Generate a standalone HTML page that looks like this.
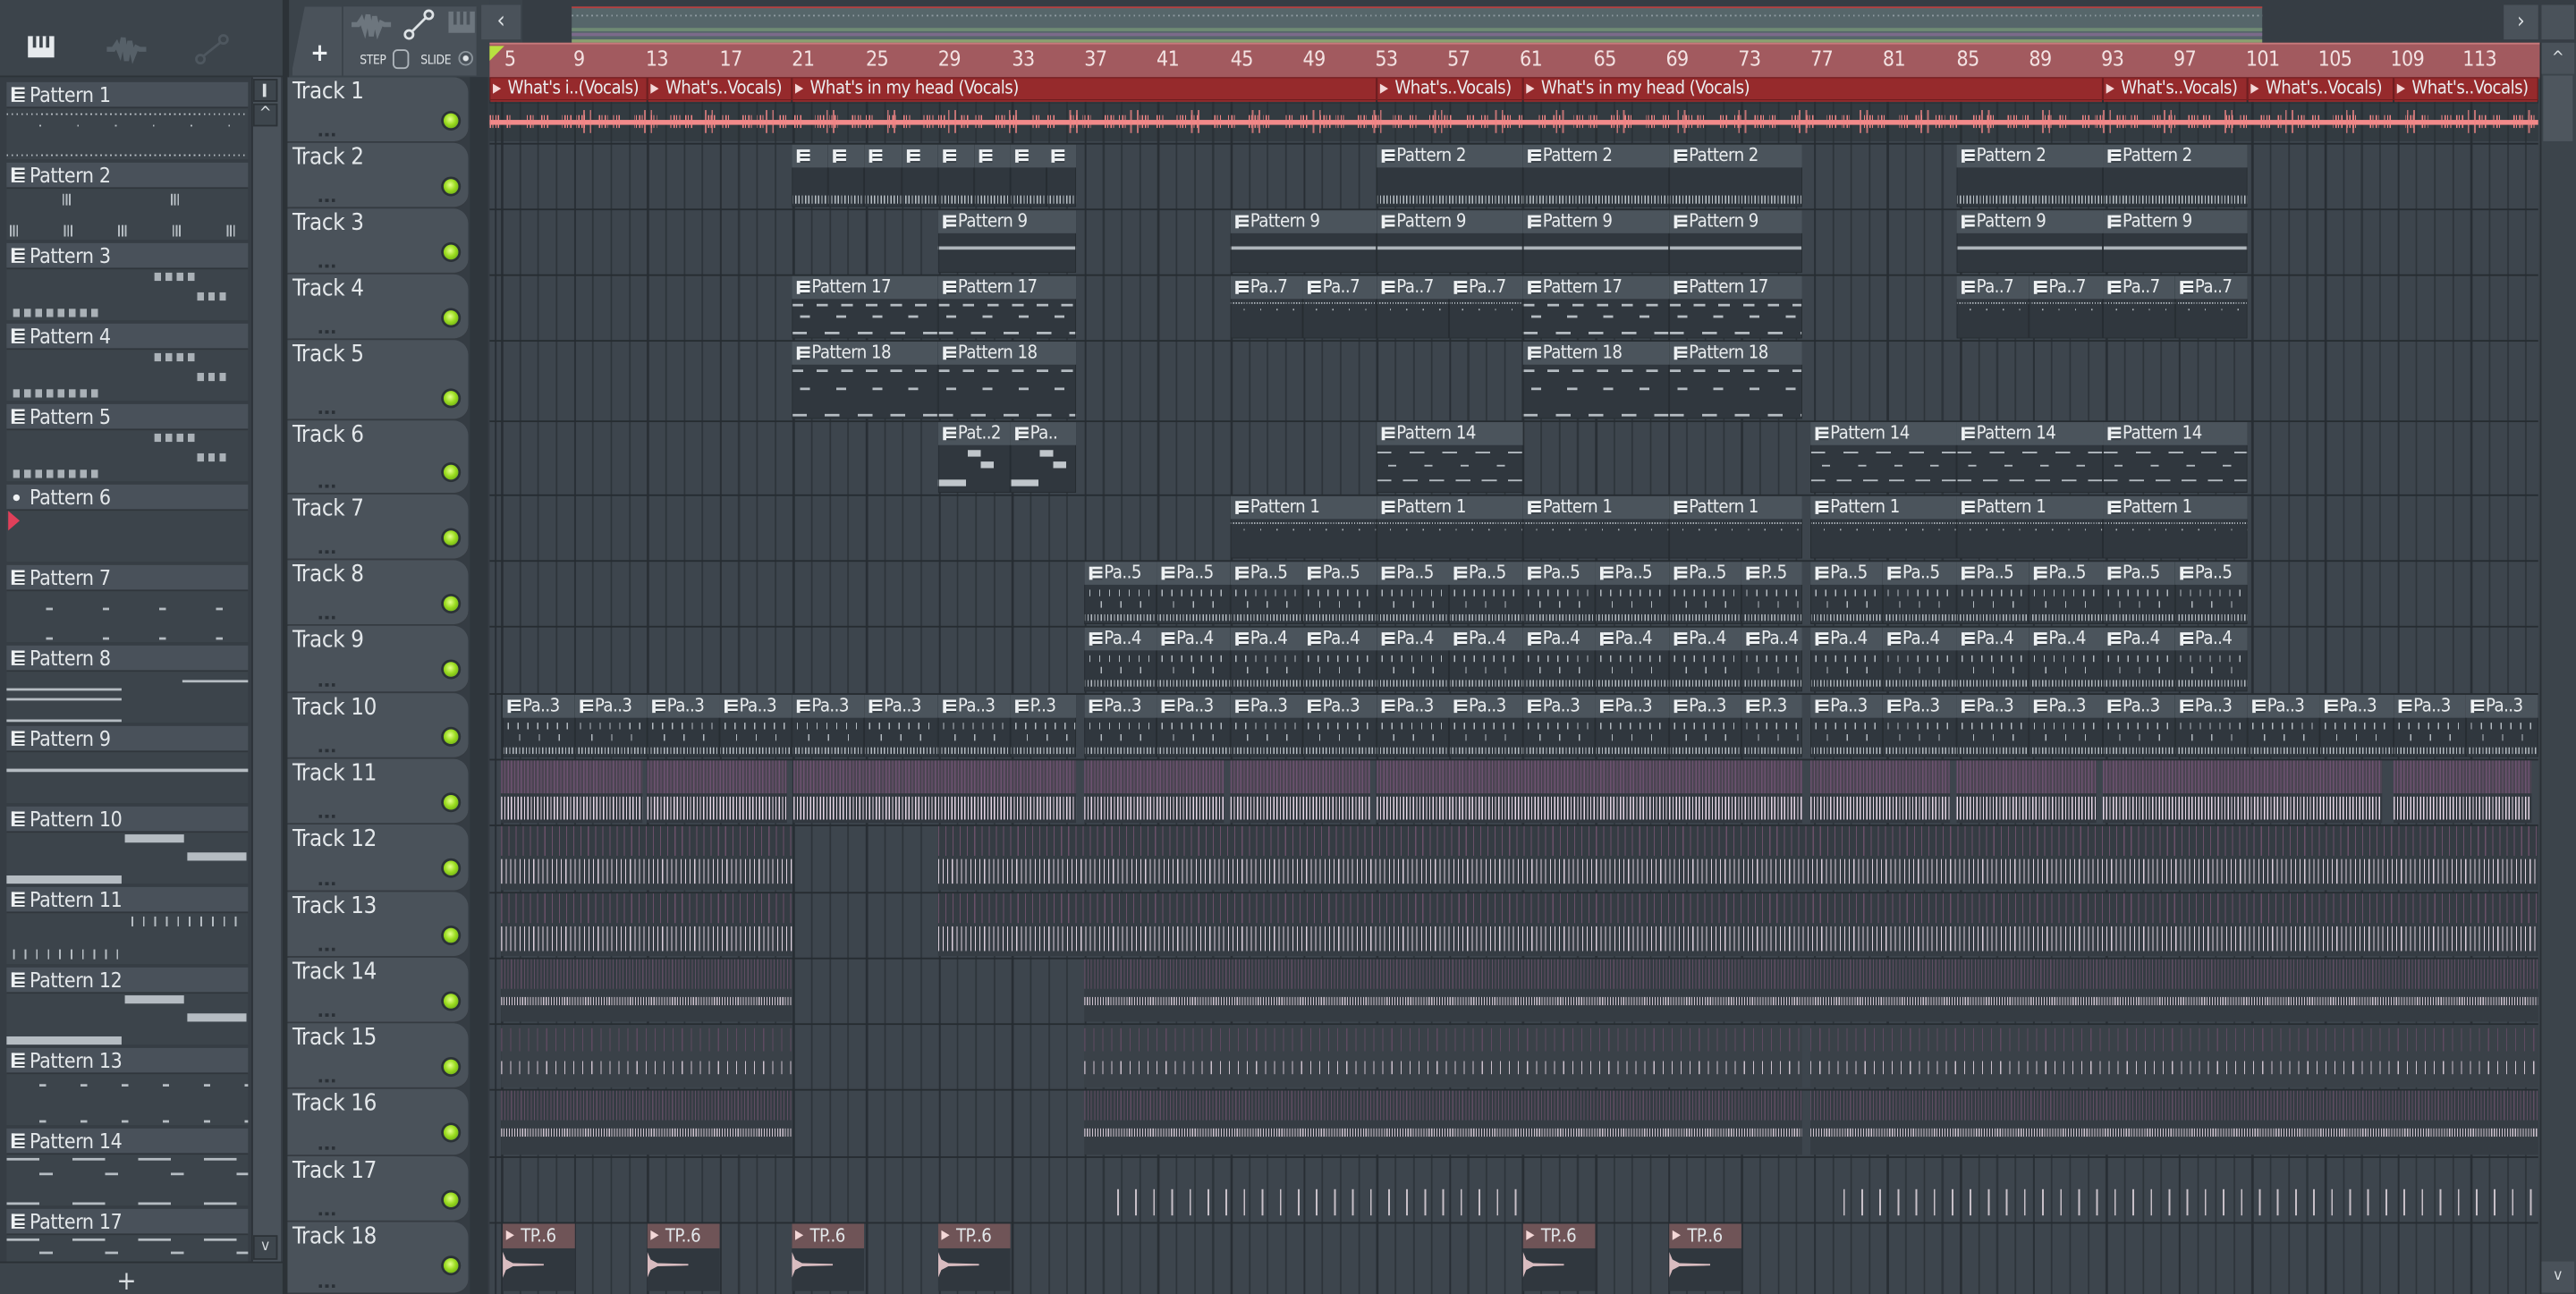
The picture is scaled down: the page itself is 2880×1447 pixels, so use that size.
<!DOCTYPE html>
<html><head><meta charset="utf-8"><style>
html,body{margin:0;padding:0;width:2880px;height:1446px;overflow:hidden;background:#3b434a}
#s{position:absolute;left:0;top:0;width:1568px;height:788px;transform:scale(1.836735);transform-origin:0 0;background:#3b434a;font-family:"Liberation Sans Narrow","DejaVu Sans Condensed","Liberation Sans",sans-serif;color:#e3e7ea;overflow:hidden}
.a{position:absolute}
#g{position:absolute;left:298px;top:47px;width:1247px;height:741px;background-color:#3d454d;
background-image:repeating-linear-gradient(90deg,#282e34 0 1.2px,transparent 1.2px 44.4px),repeating-linear-gradient(90deg,#2d343a 0 1px,transparent 1px 11.1px);background-position:7px 0,7px 0}
.hl{position:absolute;left:298px;width:1247px;height:1px;background:#262c31}
.th{position:absolute;left:175px;width:110px;background:#4a525a;border-radius:0 9px 9px 0;border-bottom:1px solid #353b41;box-sizing:border-box}
.th span{position:absolute;left:3px;top:1px;font-size:14px;letter-spacing:-.2px}
.th i{position:absolute;left:19px;bottom:3px;width:10px;height:2px;background:repeating-linear-gradient(90deg,#2a3036 0 2px,transparent 2px 4px)}
.th u{position:absolute;right:6px;top:22px;width:9px;height:9px;border-radius:50%;background:radial-gradient(circle at 45% 40%,#e2ff8a 0,#9bdc20 45%,#5a9a10 100%);box-shadow:0 0 0 1.5px #2b3237}
.c{position:absolute;background-color:#30373e;overflow:hidden;box-shadow:inset 0 0 0 .5px #262c31;background-repeat:no-repeat}
.c b{display:block;height:14px;background:#4b545c;font-weight:normal;font-size:11px;letter-spacing:-.3px;line-height:14px;padding-left:12px;white-space:nowrap;overflow:hidden;position:relative;color:#e9ecee}
.c b:before{content:"";position:absolute;left:3px;top:3px;width:6px;height:8px;background:repeating-linear-gradient(#eef1f3 0 1.5px,#3a4249 1.5px 2.7px);border-left:2px solid #eef1f3}
.c.au b{background:#962a2c;padding-left:11px;box-shadow:inset 0 0 0 .6px #6e1c1e}
.c.au b:before{width:0;height:0;border-left:5px solid #f3d7d7;border-top:3px solid transparent;border-bottom:3px solid transparent;background:none;top:4px;left:2px}
.t2{background-image:repeating-linear-gradient(90deg,#b9c0c6 0 .7px,transparent .7px 2px);background-size:100% 5px;background-position:0 31px}
.t9{background-image:linear-gradient(#aeb5bb,#aeb5bb);background-size:100% 2px;background-position:0 22px}
.t17{background-image:repeating-linear-gradient(90deg,#b5bcc2 0 7px,transparent 7px 15px),repeating-linear-gradient(90deg,transparent 0 5px,#b5bcc2 5px 11px,transparent 11px 22px),repeating-linear-gradient(90deg,#b5bcc2 0 9px,transparent 9px 20px);background-size:100% 1.5px,100% 1.5px,100% 1.5px;background-position:0 17px,0 24px,0 34px}
.t18{background-image:repeating-linear-gradient(90deg,#b5bcc2 0 7px,transparent 7px 15px),repeating-linear-gradient(90deg,transparent 0 5px,#b5bcc2 5px 11px,transparent 11px 22px),repeating-linear-gradient(90deg,#b5bcc2 0 9px,transparent 9px 20px);background-size:100% 1.5px,100% 1.5px,100% 1.5px;background-position:0 17px,0 28px,0 44px}
.t14{background-image:repeating-linear-gradient(90deg,#b5bcc2 0 9px,transparent 9px 20px),repeating-linear-gradient(90deg,transparent 0 7px,#b5bcc2 7px 12px,transparent 12px 22px),repeating-linear-gradient(90deg,#b5bcc2 0 9px,transparent 9px 16px);background-size:100% 1.2px,100% 1.2px,100% 1.2px;background-position:0 18px,0 26px,0 35px}
.t1{background-image:repeating-linear-gradient(90deg,#aeb5bb 0 .7px,transparent .7px 1.6px),repeating-linear-gradient(90deg,transparent 0 8px,#aeb5bb 8px 8.7px,transparent 8.7px 10px);background-size:100% 1px,100% 1px;background-position:0 16px,0 20px}
.tp{background-image:repeating-linear-gradient(90deg,transparent 0 3px,#b3bac0 3px 3.7px,transparent 3.7px 6px),repeating-linear-gradient(90deg,transparent 0 10px,#b3bac0 10px 10.7px,transparent 10.7px 12px),repeating-linear-gradient(90deg,#b3bac0 0 .7px,transparent .7px 2px);background-size:100% 4px,100% 4px,100% 4px;background-position:0 17px,0 24px,0 32px}
.t6{background-image:linear-gradient(90deg,transparent 0 18px,#c0c6cb 18px 26px,transparent 26px),linear-gradient(90deg,transparent 0 26px,#c0c6cb 26px 34px,transparent 34px),linear-gradient(90deg,#c0c6cb 0 17px,transparent 17px);background-size:100% 4px,100% 4px,100% 4px;background-position:0 17px,0 24px,0 35px}
.w{position:absolute;background-color:#32383f;background-image:repeating-linear-gradient(90deg,#6d5270 0 .7px,#4b4452 .7px 2px),repeating-linear-gradient(90deg,#e6d6e6 0 .7px,transparent .7px 2px);background-size:100% 20px,100% 14px;background-position:0 0,0 22px;background-repeat:no-repeat}
.w2{position:absolute;background-color:#353c43;background-image:repeating-linear-gradient(90deg,#6a5068 0 .6px,transparent .6px 4.4px),repeating-linear-gradient(90deg,#ddd0dd 0 .6px,transparent .6px 2.8px);background-size:100% 18px,100% 15px;background-position:0 0,0 20px;background-repeat:no-repeat}
.w3{position:absolute;background-color:#353c43;background-image:repeating-linear-gradient(90deg,#5f4d62 0 .6px,transparent .6px 2px),repeating-linear-gradient(90deg,#cfc3cf 0 .6px,transparent .6px 1.6px);background-size:100% 18px,100% 5px;background-position:0 0,0 23px;background-repeat:no-repeat}
.w4{position:absolute;background-color:#3a4148;background-image:repeating-linear-gradient(90deg,#5e4a60 0 .6px,transparent .6px 5.5px),repeating-linear-gradient(90deg,#ccc0cc 0 .6px,transparent .6px 5.5px);background-size:100% 14px,100% 8px;background-position:0 2px,0 22px;background-repeat:no-repeat}
.rn{position:absolute;top:28px;font-size:12.5px;color:#f3e2e2;letter-spacing:-.3px}
.pl{position:absolute;left:4px;width:147px}
.pl b{display:block;height:15px;background:#49515a;font-weight:normal;font-size:12.5px;letter-spacing:-.2px;line-height:15px;padding-left:14px;position:relative;border-bottom:1px solid #30363c}
.pl b:before{content:"";position:absolute;left:3px;top:3px;width:6px;height:9px;background:repeating-linear-gradient(#eef1f3 0 1.5px,#3a4249 1.5px 2.7px);border-left:2px solid #eef1f3}
.pl.n b:before{width:4px;height:4px;border:none;border-radius:50%;background:#eef1f3;top:6px;left:4px}
.pl div{height:31px;background-color:#3c444b;background-repeat:no-repeat}
.tpc{position:absolute;height:41px;background:#30373e;overflow:hidden}
.tpc b{display:block;height:15px;background:#6f5457;font-weight:normal;font-size:11px;letter-spacing:-.3px;line-height:15px;padding-left:11px;position:relative}
.tpc b:before{content:"";position:absolute;left:2px;top:4px;border-left:5px solid #f3d7d7;border-top:3px solid transparent;border-bottom:3px solid transparent}
.tpc i{position:absolute;left:0;top:17px;width:25px;height:16px;background:#d9bcc0;clip-path:polygon(0 0,8% 30%,25% 44%,100% 47%,100% 53%,25% 56%,8% 70%,0 100%)}
</style></head><body><div id="s">

<!-- top left toolbar -->
<div class="a" style="left:0;top:0;width:172px;height:46px;background:#3c444b;border-bottom:2px solid #2d3338"></div>
<div class="a" style="left:17px;top:22px;width:16px;height:13px;background:#e6eaed"></div>
<div class="a" style="left:20px;top:22px;width:2px;height:7px;background:#3c444b"></div>
<div class="a" style="left:24px;top:22px;width:2px;height:7px;background:#3c444b"></div>
<div class="a" style="left:28px;top:22px;width:2px;height:7px;background:#3c444b"></div>
<svg class="a" style="left:64px;top:20px" width="26" height="20"><path d="M1 10 L5 10 L7 7 L9 12 L11 3 L13 17 L15 5 L17 14 L19 9 L21 10 L25 10" stroke="#566068" stroke-width="3" fill="none"/></svg>
<svg class="a" style="left:118px;top:20px" width="22" height="20"><circle cx="4" cy="16" r="2.5" stroke="#4e575f" stroke-width="1.5" fill="none"/><circle cx="18" cy="4" r="2.5" stroke="#4e575f" stroke-width="1.5" fill="none"/><path d="M6 14 L16 6" stroke="#4e575f" stroke-width="1.5"/></svg>

<!-- patterns list -->
<div class="a" style="left:0;top:47px;width:172px;height:741px;background:#363d44"></div>
<div class="pl" style="top:50px"><b>Pattern 1</b><div style="background-image:repeating-linear-gradient(90deg,#b5bcc2 0 1px,transparent 1px 3px),repeating-linear-gradient(90deg,transparent 0 20px,#b5bcc2 20px 21px,transparent 21px 23px),repeating-linear-gradient(90deg,#b5bcc2 0 1px,transparent 1px 3px);background-size:100% 1.2px,100% 1.2px,100% 1.2px;background-position:0 3px,0 10px,0 28px"></div></div>
<div class="pl" style="top:99px"><b>Pattern 2</b><div style="background-image:repeating-linear-gradient(90deg,transparent 0 34px,#b5bcc2 34px 35px,transparent 35px 36px,#b5bcc2 36px 37px,transparent 37px 38px,#b5bcc2 38px 39px,transparent 39px 66px),repeating-linear-gradient(90deg,transparent 0 2px,#b5bcc2 2px 3px,transparent 3px 4px,#b5bcc2 4px 5px,transparent 5px 6px,#b5bcc2 6px 7px,transparent 7px 33px);background-size:100% 7px,100% 7px;background-position:0 3px,0 22px"></div></div>
<div class="pl" style="top:148px"><b>Pattern 3</b><div style="background-image:repeating-linear-gradient(90deg,#aab1b7 0 4px,transparent 4px 6.8px),repeating-linear-gradient(90deg,#aab1b7 0 4px,transparent 4px 6.8px),repeating-linear-gradient(90deg,#aab1b7 0 4px,transparent 4px 6.8px);background-size:54px 5px,27px 5px,20px 5px;background-position:4px 24px,90px 2px,116px 14px"></div></div>
<div class="pl" style="top:197px"><b>Pattern 4</b><div style="background-image:repeating-linear-gradient(90deg,#aab1b7 0 4px,transparent 4px 6.8px),repeating-linear-gradient(90deg,#aab1b7 0 4px,transparent 4px 6.8px),repeating-linear-gradient(90deg,#aab1b7 0 4px,transparent 4px 6.8px);background-size:54px 5px,27px 5px,20px 5px;background-position:4px 24px,90px 2px,116px 14px"></div></div>
<div class="pl" style="top:246px"><b>Pattern 5</b><div style="background-image:repeating-linear-gradient(90deg,#aab1b7 0 4px,transparent 4px 6.8px),repeating-linear-gradient(90deg,#aab1b7 0 4px,transparent 4px 6.8px),repeating-linear-gradient(90deg,#aab1b7 0 4px,transparent 4px 6.8px);background-size:54px 5px,27px 5px,20px 5px;background-position:4px 24px,90px 2px,116px 14px"></div></div>
<div class="pl n" style="top:295px"><b>Pattern 6</b><div></div></div>
<div class="a" style="left:5px;top:311px;width:0;height:0;border-left:7px solid #e0405a;border-top:6px solid transparent;border-bottom:6px solid transparent"></div>
<div class="pl" style="top:344px"><b>Pattern 7</b><div style="background-image:repeating-linear-gradient(90deg,transparent 0 24px,#b5bcc2 24px 28px,transparent 28px 34.5px),repeating-linear-gradient(90deg,transparent 0 24px,#b5bcc2 24px 28px,transparent 28px 34.5px);background-size:100% 1.5px,100% 1.5px;background-position:0 10px,0 28px"></div></div>
<div class="pl" style="top:393px"><b>Pattern 8</b><div style="background-image:linear-gradient(#b5bcc2,#b5bcc2),linear-gradient(#b5bcc2,#b5bcc2),linear-gradient(#b5bcc2,#b5bcc2),linear-gradient(#b5bcc2,#b5bcc2);background-size:70px 1.5px,70px 1.5px,40px 1.5px,70px 1.5px;background-position:0 10px,0 16px,107px 5px,0 29px"></div></div>
<div class="pl" style="top:442px"><b>Pattern 9</b><div style="background-image:linear-gradient(#b5bcc2,#b5bcc2);background-size:100% 2px;background-position:0 10px"></div></div>
<div class="pl" style="top:491px"><b>Pattern 10</b><div style="background-image:linear-gradient(#b5bcc2,#b5bcc2),linear-gradient(#b5bcc2,#b5bcc2),linear-gradient(#b5bcc2,#b5bcc2);background-size:70px 5px,36px 5px,36px 5px;background-position:0 26px,72px 1px,110px 12px"></div></div>
<div class="pl" style="top:540px"><b>Pattern 11</b><div style="background-image:repeating-linear-gradient(90deg,#b5bcc2 0 1px,transparent 1px 7px),repeating-linear-gradient(90deg,#b5bcc2 0 1px,transparent 1px 7px);background-size:70px 6px,70px 6px;background-position:4px 22px,76px 2px"></div></div>
<div class="pl" style="top:589px"><b>Pattern 12</b><div style="background-image:linear-gradient(#b5bcc2,#b5bcc2),linear-gradient(#b5bcc2,#b5bcc2),linear-gradient(#b5bcc2,#b5bcc2);background-size:70px 5px,36px 5px,36px 5px;background-position:0 26px,72px 1px,110px 12px"></div></div>
<div class="pl" style="top:638px"><b>Pattern 13</b><div style="background-image:repeating-linear-gradient(90deg,transparent 0 20px,#b5bcc2 20px 24px,transparent 24px 25px),repeating-linear-gradient(90deg,transparent 0 20px,#b5bcc2 20px 24px,transparent 24px 25px);background-size:100% 1.5px,100% 1.5px;background-position:0 6px,0 28px"></div></div>
<div class="pl" style="top:687px"><b>Pattern 14</b><div style="background-image:repeating-linear-gradient(90deg,#b5bcc2 0 20px,transparent 20px 40px),repeating-linear-gradient(90deg,transparent 0 20px,#b5bcc2 20px 28px,transparent 28px 40px),repeating-linear-gradient(90deg,#b5bcc2 0 20px,transparent 20px 40px);background-size:100% 1.5px,100% 1.5px,100% 1.5px;background-position:0 2px,0 11px,0 29px"></div></div>
<div class="pl" style="top:736px"><b>Pattern 17</b><div style="height:17px;background-image:repeating-linear-gradient(90deg,#b5bcc2 0 20px,transparent 20px 40px),repeating-linear-gradient(90deg,transparent 0 20px,#b5bcc2 20px 28px,transparent 28px 40px);background-size:100% 1.5px,100% 1.5px;background-position:0 2px,0 10px"></div></div>
<div class="a" style="left:0;top:768px;width:172px;height:20px;background:#3c444b;border-top:1px solid #2a3035"></div>
<div class="a" style="left:71px;top:770px;font-size:16px;color:#d8dde0">+</div>
<!-- pattern scrollbar -->
<div class="a" style="left:153px;top:47px;width:17px;height:721px;background:#4a525a;border-left:1px solid #2c3237"></div>
<div class="a" style="left:154px;top:48px;width:15px;height:14px;background:#3e464d;box-shadow:inset 0 0 0 1px #2c3237"></div>
<div class="a" style="left:160px;top:51px;width:2px;height:8px;background:#d8dde0"></div>
<div class="a" style="left:154px;top:63px;width:15px;height:14px;background:#3e464d;box-shadow:inset 0 0 0 1px #2c3237;font-size:10px;text-align:center;color:#d8dde0;line-height:14px">^</div>
<div class="a" style="left:154px;top:752px;width:15px;height:15px;background:#3e464d;box-shadow:inset 0 0 0 1px #2c3237;font-size:9px;text-align:center;color:#d8dde0;line-height:15px">v</div>
<div class="a" style="left:172px;top:0;width:4px;height:788px;background:#2c3237"></div>

<!-- middle toolbar -->
<div class="a" style="left:176px;top:0;width:122px;height:47px;background:#3b434a"></div>
<div class="a" style="left:178px;top:4px;width:30px;height:42px;background:#4a525a;clip-path:polygon(25% 0,100% 0,100% 100%,0 100%,0 90%)"></div>
<div class="a" style="left:189px;top:23px;font-size:15px;font-weight:bold;color:#eef1f3">+</div>
<div class="a" style="left:209px;top:4px;width:81px;height:42px;background:#4a525a"></div>
<svg class="a" style="left:213px;top:6px" width="26" height="18"><path d="M1 9 L5 9 L7 6 L9 12 L11 3 L13 16 L15 4 L17 13 L19 8 L21 9 L25 9" stroke="#6d767e" stroke-width="3" fill="none"/></svg>
<svg class="a" style="left:245px;top:5px" width="20" height="20"><circle cx="4" cy="16" r="2.5" stroke="#dde2e5" stroke-width="1.5" fill="none"/><circle cx="16" cy="4" r="2.5" stroke="#dde2e5" stroke-width="1.5" fill="none"/><path d="M6 14 L14 6" stroke="#dde2e5" stroke-width="1.5"/></svg>
<div class="a" style="left:273px;top:7px;width:16px;height:13px;background:#6d767e"></div>
<div class="a" style="left:276px;top:7px;width:2px;height:8px;background:#4a525a"></div>
<div class="a" style="left:280px;top:7px;width:2px;height:8px;background:#4a525a"></div>
<div class="a" style="left:284px;top:7px;width:2px;height:8px;background:#4a525a"></div>
<div class="a" style="left:219px;top:32px;font-size:7.5px;color:#e0e4e7;letter-spacing:-.2px">STEP</div>
<div class="a" style="left:239px;top:30px;width:8px;height:10px;border:1.3px solid #aeb5bb;border-radius:3px"></div>
<div class="a" style="left:256px;top:32px;font-size:7.5px;color:#e0e4e7;letter-spacing:-.2px">SLIDE</div>
<div class="a" style="left:279px;top:31px;width:7px;height:7px;border:1.2px solid #8b949b;border-radius:50%;background:radial-gradient(circle,#e0e4e7 0 30%,transparent 40%)"></div>
<!-- overview -->
<div class="a" style="left:318px;top:0;width:1250px;height:27px;background:#363d44"></div>
<div class="a" style="left:293px;top:3px;width:24px;height:21px;background:#4a525a;color:#dde2e5;font-size:14px;text-align:center;line-height:20px">&lsaquo;</div>
<div class="a" style="left:348px;top:4px;width:1029px;height:19px;background:#56666a;border-top:1px solid #b84040;border-bottom:2px solid #8aa070;background-image:repeating-linear-gradient(90deg,#8e9aa0 0 1px,transparent 1px 3px),linear-gradient(#6f8a74,#6f8a74),linear-gradient(#7b6a8a,#7b6a8a);background-size:100% 1px,100% 2px,100% 2px;background-position:0 4px,0 12px,0 15px;background-repeat:no-repeat"></div>
<div class="a" style="left:1524px;top:3px;width:21px;height:21px;background:#4a525a;color:#dde2e5;font-size:13px;text-align:center;line-height:21px">&rsaquo;</div>
<div class="a" style="left:1547px;top:3px;width:20px;height:21px;background:#4a525a"></div>

<!-- grid -->
<div id="g"></div>
<!-- ruler -->
<div class="a" style="left:298px;top:26px;width:1248px;height:20px;background:#a25a5f;border-top:1px solid #c87a7c;border-bottom:1px solid #7b3a3e"></div>
<div class="a" style="left:298px;top:28px;width:0;height:0;border-left:9px solid #b8e040;border-bottom:9px solid transparent"></div>
<div class="rn" style="left:307px">5</div><div class="rn" style="left:349px">9</div><div class="rn" style="left:393px">13</div><div class="rn" style="left:438px">17</div><div class="rn" style="left:482px">21</div><div class="rn" style="left:527px">25</div><div class="rn" style="left:571px">29</div><div class="rn" style="left:616px">33</div><div class="rn" style="left:660px">37</div><div class="rn" style="left:704px">41</div><div class="rn" style="left:749px">45</div><div class="rn" style="left:793px">49</div><div class="rn" style="left:837px">53</div><div class="rn" style="left:881px">57</div><div class="rn" style="left:925px">61</div><div class="rn" style="left:970px">65</div><div class="rn" style="left:1014px">69</div><div class="rn" style="left:1058px">73</div><div class="rn" style="left:1102px">77</div><div class="rn" style="left:1146px">81</div><div class="rn" style="left:1191px">85</div><div class="rn" style="left:1235px">89</div><div class="rn" style="left:1279px">93</div><div class="rn" style="left:1323px">97</div><div class="rn" style="left:1367px">101</div><div class="rn" style="left:1411px">105</div><div class="rn" style="left:1455px">109</div><div class="rn" style="left:1499px">113</div>
<!-- right scroll -->
<div class="a" style="left:1546px;top:26px;width:22px;height:762px;background:#3c444b;border-left:1px solid #2a3035"></div>
<div class="a" style="left:1547px;top:26px;width:20px;height:19px;background:#4a525a;color:#dde2e5;font-size:10px;text-align:center;line-height:19px">^</div>
<div class="a" style="left:1548px;top:46px;width:18px;height:40px;background:#4e565e"></div>
<div class="a" style="left:1547px;top:768px;width:20px;height:19px;background:#4a525a;color:#dde2e5;font-size:9px;text-align:center;line-height:19px">v</div>

<!-- track column bg -->
<div class="a" style="left:176px;top:47px;width:122px;height:741px;background:#353c43"></div>
<div class="a" style="left:286px;top:47px;width:11px;height:741px;background:#2f363c"></div>

<!-- track headers -->
<div class="th" style="top:47px;height:40px"><span>Track 1</span><i></i><u></u></div>
<div class="th" style="top:87px;height:40px"><span>Track 2</span><i></i><u></u></div>
<div class="th" style="top:127px;height:40px"><span>Track 3</span><i></i><u></u></div>
<div class="th" style="top:167px;height:40px"><span>Track 4</span><i></i><u></u></div>
<div class="th" style="top:207px;height:49px"><span>Track 5</span><i></i><u style="top:31px"></u></div>
<div class="th" style="top:256px;height:45px"><span>Track 6</span><i></i><u style="top:27px"></u></div>
<div class="th" style="top:301px;height:40px"><span>Track 7</span><i></i><u></u></div>
<div class="th" style="top:341px;height:40px"><span>Track 8</span><i></i><u></u></div>
<div class="th" style="top:381px;height:41px"><span>Track 9</span><i></i><u></u></div>
<div class="th" style="top:422px;height:40px"><span>Track 10</span><i></i><u></u></div>
<div class="th" style="top:462px;height:40px"><span>Track 11</span><i></i><u></u></div>
<div class="th" style="top:502px;height:41px"><span>Track 12</span><i></i><u></u></div>
<div class="th" style="top:543px;height:40px"><span>Track 13</span><i></i><u></u></div>
<div class="th" style="top:583px;height:40px"><span>Track 14</span><i></i><u></u></div>
<div class="th" style="top:623px;height:40px"><span>Track 15</span><i></i><u></u></div>
<div class="th" style="top:663px;height:41px"><span>Track 16</span><i></i><u></u></div>
<div class="th" style="top:704px;height:40px"><span>Track 17</span><i></i><u></u></div>
<div class="th" style="top:744px;height:44px"><span>Track 18</span><i></i><u></u></div>

<!-- row separators -->
<div class="hl" style="top:87px"></div><div class="hl" style="top:127px"></div><div class="hl" style="top:167px"></div><div class="hl" style="top:207px"></div><div class="hl" style="top:256px"></div><div class="hl" style="top:301px"></div><div class="hl" style="top:341px"></div><div class="hl" style="top:381px"></div><div class="hl" style="top:422px"></div><div class="hl" style="top:462px"></div><div class="hl" style="top:502px"></div><div class="hl" style="top:543px"></div><div class="hl" style="top:583px"></div><div class="hl" style="top:623px"></div><div class="hl" style="top:663px"></div><div class="hl" style="top:704px"></div><div class="hl" style="top:744px"></div>

<!-- Track 1 audio -->
<div class="a" style="left:298px;top:47px;width:1247px;height:39px;background:rgba(40,46,52,.45)"></div>
<div class="a" style="left:298px;top:47px;width:1247px;height:15px;background:#932a2c"></div>
<div class="a" style="left:298px;top:72.5px;width:1247px;height:3px;background:#f28a8a"></div>
<div class="a" style="left:298px;top:70px;width:1247px;height:8px;background:repeating-linear-gradient(90deg,#f08585 0 .8px,transparent .8px 1.6px,#f08585 1.6px 2.2px,transparent 2.2px 3.5px);-webkit-mask:repeating-linear-gradient(90deg,#000 0 6px,transparent 6px 9px,#000 9px 14px,transparent 14px 22px)"></div>
<div class="a" style="left:340px;top:67px;width:1200px;height:14px;background:repeating-linear-gradient(90deg,transparent 0 15px,#f08585 15px 16px,transparent 16px 19px,#f08585 19px 20px,transparent 20px 37px);opacity:.75"></div>
<div class="c au" style="left:298px;top:47px;width:96px;height:16px;background:none"><b>What's i..(Vocals)</b></div>
<div class="c au" style="left:394px;top:47px;width:88px;height:16px;background:none"><b>What's..Vocals)</b></div>
<div class="c au" style="left:482px;top:47px;width:356px;height:16px;background:none"><b>What's in my head (Vocals)</b></div>
<div class="c au" style="left:838px;top:47px;width:89px;height:16px;background:none"><b>What's..Vocals)</b></div>
<div class="c au" style="left:927px;top:47px;width:353px;height:16px;background:none"><b>What's in my head (Vocals)</b></div>
<div class="c au" style="left:1280px;top:47px;width:88px;height:16px;background:none"><b>What's..Vocals)</b></div>
<div class="c au" style="left:1368px;top:47px;width:89px;height:16px;background:none"><b>What's..Vocals)</b></div>
<div class="c au" style="left:1457px;top:47px;width:88px;height:16px;background:none"><b>What's..Vocals)</b></div>

<!-- Track 2 -->
<div class="c t2" style="left:482px;top:88px;width:22px;height:38px"><b></b></div>
<div class="c t2" style="left:504px;top:88px;width:22px;height:38px"><b></b></div>
<div class="c t2" style="left:526px;top:88px;width:23px;height:38px"><b></b></div>
<div class="c t2" style="left:549px;top:88px;width:22px;height:38px"><b></b></div>
<div class="c t2" style="left:571px;top:88px;width:22px;height:38px"><b></b></div>
<div class="c t2" style="left:593px;top:88px;width:22px;height:38px"><b></b></div>
<div class="c t2" style="left:615px;top:88px;width:22px;height:38px"><b></b></div>
<div class="c t2" style="left:637px;top:88px;width:18px;height:38px"><b></b></div>
<div class="c t2" style="left:838px;top:88px;width:89px;height:38px"><b>Pattern 2</b></div>
<div class="c t2" style="left:927px;top:88px;width:89px;height:38px"><b>Pattern 2</b></div>
<div class="c t2" style="left:1016px;top:88px;width:81px;height:38px"><b>Pattern 2</b></div>
<div class="c t2" style="left:1191px;top:88px;width:89px;height:38px"><b>Pattern 2</b></div>
<div class="c t2" style="left:1280px;top:88px;width:88px;height:38px"><b>Pattern 2</b></div>

<!-- Track 3 -->
<div class="c t9" style="left:571px;top:128px;width:84px;height:38px"><b>Pattern 9</b></div>
<div class="c t9" style="left:749px;top:128px;width:89px;height:38px"><b>Pattern 9</b></div>
<div class="c t9" style="left:838px;top:128px;width:89px;height:38px"><b>Pattern 9</b></div>
<div class="c t9" style="left:927px;top:128px;width:89px;height:38px"><b>Pattern 9</b></div>
<div class="c t9" style="left:1016px;top:128px;width:81px;height:38px"><b>Pattern 9</b></div>
<div class="c t9" style="left:1191px;top:128px;width:89px;height:38px"><b>Pattern 9</b></div>
<div class="c t9" style="left:1280px;top:128px;width:88px;height:38px"><b>Pattern 9</b></div>

<!-- Track 4 -->
<div class="c t17" style="left:482px;top:168px;width:89px;height:38px"><b>Pattern 17</b></div>
<div class="c t17" style="left:571px;top:168px;width:84px;height:38px"><b>Pattern 17</b></div>
<div class="c t1" style="left:749px;top:168px;width:44px;height:38px"><b>Pa..7</b></div>
<div class="c t1" style="left:793px;top:168px;width:45px;height:38px"><b>Pa..7</b></div>
<div class="c t1" style="left:838px;top:168px;width:44px;height:38px"><b>Pa..7</b></div>
<div class="c t1" style="left:882px;top:168px;width:45px;height:38px"><b>Pa..7</b></div>
<div class="c t17" style="left:927px;top:168px;width:89px;height:38px"><b>Pattern 17</b></div>
<div class="c t17" style="left:1016px;top:168px;width:81px;height:38px"><b>Pattern 17</b></div>
<div class="c t1" style="left:1191px;top:168px;width:44px;height:38px"><b>Pa..7</b></div>
<div class="c t1" style="left:1235px;top:168px;width:45px;height:38px"><b>Pa..7</b></div>
<div class="c t1" style="left:1280px;top:168px;width:44px;height:38px"><b>Pa..7</b></div>
<div class="c t1" style="left:1324px;top:168px;width:44px;height:38px"><b>Pa..7</b></div>

<!-- Track 5 -->
<div class="c t18" style="left:482px;top:208px;width:89px;height:47px"><b>Pattern 18</b></div>
<div class="c t18" style="left:571px;top:208px;width:84px;height:47px"><b>Pattern 18</b></div>
<div class="c t18" style="left:927px;top:208px;width:89px;height:47px"><b>Pattern 18</b></div>
<div class="c t18" style="left:1016px;top:208px;width:81px;height:47px"><b>Pattern 18</b></div>

<!-- Track 6 -->
<div class="c t6" style="left:571px;top:257px;width:44px;height:43px"><b>Pat..2</b></div>
<div class="c t6" style="left:615px;top:257px;width:40px;height:43px"><b>Pa..</b></div>
<div class="c t14" style="left:838px;top:257px;width:89px;height:43px"><b>Pattern 14</b></div>
<div class="c t14" style="left:1102px;top:257px;width:89px;height:43px"><b>Pattern 14</b></div>
<div class="c t14" style="left:1191px;top:257px;width:89px;height:43px"><b>Pattern 14</b></div>
<div class="c t14" style="left:1280px;top:257px;width:88px;height:43px"><b>Pattern 14</b></div>

<!-- Track 7 -->
<div class="c t1" style="left:749px;top:302px;width:89px;height:38px"><b>Pattern 1</b></div>
<div class="c t1" style="left:838px;top:302px;width:89px;height:38px"><b>Pattern 1</b></div>
<div class="c t1" style="left:927px;top:302px;width:89px;height:38px"><b>Pattern 1</b></div>
<div class="c t1" style="left:1016px;top:302px;width:81px;height:38px"><b>Pattern 1</b></div>
<div class="c t1" style="left:1102px;top:302px;width:89px;height:38px"><b>Pattern 1</b></div>
<div class="c t1" style="left:1191px;top:302px;width:89px;height:38px"><b>Pattern 1</b></div>
<div class="c t1" style="left:1280px;top:302px;width:88px;height:38px"><b>Pattern 1</b></div>

<!-- Track 8 -->
<div class="c tp" style="left:660px;top:342px;width:44px;height:38px"><b>Pa..5</b></div>
<div class="c tp" style="left:704px;top:342px;width:45px;height:38px"><b>Pa..5</b></div>
<div class="c tp" style="left:749px;top:342px;width:44px;height:38px"><b>Pa..5</b></div>
<div class="c tp" style="left:793px;top:342px;width:45px;height:38px"><b>Pa..5</b></div>
<div class="c tp" style="left:838px;top:342px;width:44px;height:38px"><b>Pa..5</b></div>
<div class="c tp" style="left:882px;top:342px;width:45px;height:38px"><b>Pa..5</b></div>
<div class="c tp" style="left:927px;top:342px;width:44px;height:38px"><b>Pa..5</b></div>
<div class="c tp" style="left:971px;top:342px;width:45px;height:38px"><b>Pa..5</b></div>
<div class="c tp" style="left:1016px;top:342px;width:44px;height:38px"><b>Pa..5</b></div>
<div class="c tp" style="left:1060px;top:342px;width:37px;height:38px"><b>P..5</b></div>
<div class="c tp" style="left:1102px;top:342px;width:44px;height:38px"><b>Pa..5</b></div>
<div class="c tp" style="left:1146px;top:342px;width:45px;height:38px"><b>Pa..5</b></div>
<div class="c tp" style="left:1191px;top:342px;width:44px;height:38px"><b>Pa..5</b></div>
<div class="c tp" style="left:1235px;top:342px;width:45px;height:38px"><b>Pa..5</b></div>
<div class="c tp" style="left:1280px;top:342px;width:44px;height:38px"><b>Pa..5</b></div>
<div class="c tp" style="left:1324px;top:342px;width:44px;height:38px"><b>Pa..5</b></div>

<!-- Track 9 -->
<div class="c tp" style="left:660px;top:382px;width:44px;height:39px"><b>Pa..4</b></div>
<div class="c tp" style="left:704px;top:382px;width:45px;height:39px"><b>Pa..4</b></div>
<div class="c tp" style="left:749px;top:382px;width:44px;height:39px"><b>Pa..4</b></div>
<div class="c tp" style="left:793px;top:382px;width:45px;height:39px"><b>Pa..4</b></div>
<div class="c tp" style="left:838px;top:382px;width:44px;height:39px"><b>Pa..4</b></div>
<div class="c tp" style="left:882px;top:382px;width:45px;height:39px"><b>Pa..4</b></div>
<div class="c tp" style="left:927px;top:382px;width:44px;height:39px"><b>Pa..4</b></div>
<div class="c tp" style="left:971px;top:382px;width:45px;height:39px"><b>Pa..4</b></div>
<div class="c tp" style="left:1016px;top:382px;width:44px;height:39px"><b>Pa..4</b></div>
<div class="c tp" style="left:1060px;top:382px;width:37px;height:39px"><b>Pa..4</b></div>
<div class="c tp" style="left:1102px;top:382px;width:44px;height:39px"><b>Pa..4</b></div>
<div class="c tp" style="left:1146px;top:382px;width:45px;height:39px"><b>Pa..4</b></div>
<div class="c tp" style="left:1191px;top:382px;width:44px;height:39px"><b>Pa..4</b></div>
<div class="c tp" style="left:1235px;top:382px;width:45px;height:39px"><b>Pa..4</b></div>
<div class="c tp" style="left:1280px;top:382px;width:44px;height:39px"><b>Pa..4</b></div>
<div class="c tp" style="left:1324px;top:382px;width:44px;height:39px"><b>Pa..4</b></div>

<!-- Track 10 -->
<div class="c tp" style="left:306px;top:423px;width:44px;height:38px"><b>Pa..3</b></div>
<div class="c tp" style="left:350px;top:423px;width:44px;height:38px"><b>Pa..3</b></div>
<div class="c tp" style="left:394px;top:423px;width:44px;height:38px"><b>Pa..3</b></div>
<div class="c tp" style="left:438px;top:423px;width:44px;height:38px"><b>Pa..3</b></div>
<div class="c tp" style="left:482px;top:423px;width:44px;height:38px"><b>Pa..3</b></div>
<div class="c tp" style="left:526px;top:423px;width:45px;height:38px"><b>Pa..3</b></div>
<div class="c tp" style="left:571px;top:423px;width:44px;height:38px"><b>Pa..3</b></div>
<div class="c tp" style="left:615px;top:423px;width:40px;height:38px"><b>P..3</b></div>
<div class="c tp" style="left:660px;top:423px;width:44px;height:38px"><b>Pa..3</b></div>
<div class="c tp" style="left:704px;top:423px;width:45px;height:38px"><b>Pa..3</b></div>
<div class="c tp" style="left:749px;top:423px;width:44px;height:38px"><b>Pa..3</b></div>
<div class="c tp" style="left:793px;top:423px;width:45px;height:38px"><b>Pa..3</b></div>
<div class="c tp" style="left:838px;top:423px;width:44px;height:38px"><b>Pa..3</b></div>
<div class="c tp" style="left:882px;top:423px;width:45px;height:38px"><b>Pa..3</b></div>
<div class="c tp" style="left:927px;top:423px;width:44px;height:38px"><b>Pa..3</b></div>
<div class="c tp" style="left:971px;top:423px;width:45px;height:38px"><b>Pa..3</b></div>
<div class="c tp" style="left:1016px;top:423px;width:44px;height:38px"><b>Pa..3</b></div>
<div class="c tp" style="left:1060px;top:423px;width:37px;height:38px"><b>P..3</b></div>
<div class="c tp" style="left:1102px;top:423px;width:44px;height:38px"><b>Pa..3</b></div>
<div class="c tp" style="left:1146px;top:423px;width:45px;height:38px"><b>Pa..3</b></div>
<div class="c tp" style="left:1191px;top:423px;width:44px;height:38px"><b>Pa..3</b></div>
<div class="c tp" style="left:1235px;top:423px;width:45px;height:38px"><b>Pa..3</b></div>
<div class="c tp" style="left:1280px;top:423px;width:44px;height:38px"><b>Pa..3</b></div>
<div class="c tp" style="left:1324px;top:423px;width:44px;height:38px"><b>Pa..3</b></div>
<div class="c tp" style="left:1368px;top:423px;width:44px;height:38px"><b>Pa..3</b></div>
<div class="c tp" style="left:1412px;top:423px;width:45px;height:38px"><b>Pa..3</b></div>
<div class="c tp" style="left:1457px;top:423px;width:44px;height:38px"><b>Pa..3</b></div>
<div class="c tp" style="left:1501px;top:423px;width:44px;height:38px"><b>Pa..3</b></div>

<!-- Track 11 audio -->
<div class="w" style="left:305px;top:463px;width:86px;height:38px"></div>
<div class="w" style="left:394px;top:463px;width:85px;height:38px"></div>
<div class="w" style="left:483px;top:463px;width:172px;height:38px"></div>
<div class="w" style="left:660px;top:463px;width:85px;height:38px"></div>
<div class="w" style="left:749px;top:463px;width:85px;height:38px"></div>
<div class="w" style="left:838px;top:463px;width:259px;height:38px"></div>
<div class="w" style="left:1102px;top:463px;width:85px;height:38px"></div>
<div class="w" style="left:1191px;top:463px;width:85px;height:38px"></div>
<div class="w" style="left:1280px;top:463px;width:170px;height:38px"></div>
<div class="w" style="left:1457px;top:463px;width:84px;height:38px"></div>

<!-- Track 12,13 -->
<div class="w2" style="left:305px;top:503px;width:177px;height:39px"></div>
<div class="w2" style="left:571px;top:503px;width:974px;height:39px"></div>
<div class="w2" style="left:305px;top:544px;width:177px;height:38px"></div>
<div class="w2" style="left:571px;top:544px;width:974px;height:38px"></div>
<!-- Track 14 -->
<div class="w3" style="left:305px;top:584px;width:177px;height:38px"></div>
<div class="w3" style="left:660px;top:584px;width:885px;height:38px"></div>
<!-- Track 15 -->
<div class="w4" style="left:305px;top:624px;width:177px;height:38px"></div>
<div class="w4" style="left:660px;top:624px;width:437px;height:38px"></div>
<div class="w4" style="left:1102px;top:624px;width:443px;height:38px"></div>
<!-- Track 16 -->
<div class="w3" style="left:305px;top:664px;width:177px;height:39px"></div>
<div class="w3" style="left:660px;top:664px;width:437px;height:39px"></div>
<div class="w3" style="left:1102px;top:664px;width:443px;height:39px"></div>
<!-- Track 17 -->
<div class="a" style="left:680px;top:724px;width:245px;height:16px;background:repeating-linear-gradient(90deg,#c8c0c8 0 1px,transparent 1px 11px)"></div>
<div class="a" style="left:1122px;top:724px;width:423px;height:16px;background:repeating-linear-gradient(90deg,#c8c0c8 0 1px,transparent 1px 11px)"></div>

<!-- Track 18 -->
<div class="tpc" style="left:306px;top:745px;width:44px"><b>TP..6</b><i></i></div>
<div class="tpc" style="left:394px;top:745px;width:44px"><b>TP..6</b><i></i></div>
<div class="tpc" style="left:482px;top:745px;width:44px"><b>TP..6</b><i></i></div>
<div class="tpc" style="left:571px;top:745px;width:44px"><b>TP..6</b><i></i></div>
<div class="tpc" style="left:927px;top:745px;width:44px"><b>TP..6</b><i></i></div>
<div class="tpc" style="left:1016px;top:745px;width:44px"><b>TP..6</b><i></i></div>

</div></body></html>
